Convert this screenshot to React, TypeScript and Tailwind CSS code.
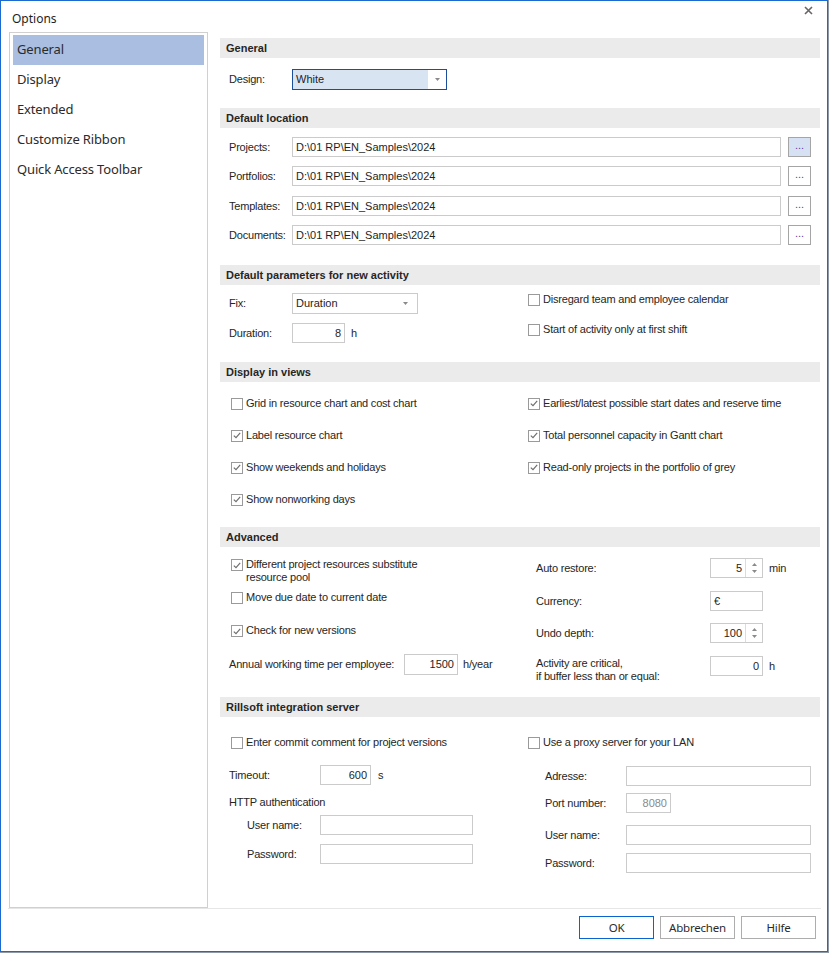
import React from "react";

const labelText = "text-[11px] leading-[13px] tracking-[-0.2px] text-[#262626]";

function SectionHeader({ title, className = "" }: { title: string; className?: string }) {
  return (
    <div className={"flex h-[20px] items-center bg-[#ebebeb] pl-[6px] text-[11px] font-bold text-[#262626] " + className}>
      {title}
    </div>
  );
}

function Arrow({ up = false }: { up?: boolean }) {
  return (
    <svg width="5" height="3" viewBox="0 0 5 3" className="block">
      <path d={up ? "M0 3 L2.5 0 L5 3 Z" : "M0 0 L5 0 L2.5 3 Z"} fill="#8a8a8a" />
    </svg>
  );
}

function CheckBox({ label, checked = false }: { label: React.ReactNode; checked?: boolean }) {
  return (
    <div className="flex items-start">
      <span className="mt-px flex h-[12px] w-[12px] shrink-0 items-center justify-center border border-[#9a9a9a] bg-white">
        {checked && (
          <svg width="8" height="7" viewBox="0 0 8 7">
            <path d="M0.8 3.6 L3 5.6 L7.2 0.9" fill="none" stroke="#6e6e6e" strokeWidth="1.2" />
          </svg>
        )}
      </span>
      <span className={"ml-[3px] " + labelText}>{label}</span>
    </div>
  );
}

function TextBox({ value = "", w, align = "left", muted = false, h = "h-[20px]" }: { value?: string; w: string; align?: "left" | "right"; muted?: boolean; h?: string }) {
  return (
    <div
      className={
        "flex shrink-0 items-center border border-[#cbcbcb] bg-white px-[3px] text-[11px] " +
        h + " " + w + " " +
        (align === "right" ? "justify-end " : "") +
        (muted ? "text-[#8a8a8a]" : "text-[#1e1e1e]")
      }
    >
      {value}
    </div>
  );
}

function Spinner({ value }: { value: string }) {
  return (
    <div className="flex h-[20px] w-[53px] border border-[#cbcbcb] bg-white text-[11px] text-[#1e1e1e]">
      <div className="flex flex-1 items-center justify-end pr-[3px]">{value}</div>
      <div className="flex w-[17px] flex-col items-center justify-center gap-[4px] border-l border-[#dcdcdc]">
        <Arrow up />
        <Arrow />
      </div>
    </div>
  );
}

const menu = ["General", "Display", "Extended", "Customize Ribbon", "Quick Access Toolbar"];

export default function App() {
  return (
    <div className="h-[953px] w-[829px] bg-[#8d98a8] font-['Liberation_Sans',Arial,sans-serif]">
      <div className="flex h-[952px] w-[828px] flex-col border border-[#1a6ad0] bg-white">
        {/* title bar */}
        <div className="flex h-[31px] shrink-0 items-center justify-between pl-[11px] pr-[14px]">
          <span className="pt-[5px] font-['Noto_Sans',sans-serif] text-[12px] text-[#1e1e1e]">Options</span>
          <svg width="9" height="9" viewBox="0 0 9 9" className="-mt-[12px]">
            <path d="M1 1 L8 8 M8 1 L1 8" stroke="#666" strokeWidth="1.6" />
          </svg>
        </div>

        <div className="flex h-[876px] shrink-0">
          {/* page list */}
          <div className="ml-[8px] h-[876px] w-[199px] shrink-0 border border-[#d0d0d0] px-[3px] pt-[2px] font-['Noto_Sans',sans-serif] text-[13px] tracking-[-0.15px] text-[#2b2b2b]">
            {menu.map((m, i) => (
              <div key={m} className={"flex h-[30px] items-center pl-[4px] " + (i === 0 ? "bg-[#a9bee0]" : "")}>
                {m}
              </div>
            ))}
          </div>

          {/* settings */}
          <div className="ml-[12px] w-[600px] pt-[6px]">
            <SectionHeader title="General" />
            <div className="mt-[11px] flex items-center pl-[9px]">
              <span className={"w-[63px] " + labelText}>Design:</span>
              <div className="flex h-[21px] w-[155px] border border-[#1d4e9b] bg-white">
                <div className="flex w-[135px] items-center bg-[#d9e4f3] pl-[3px] text-[11px] text-[#1e1e1e]">White</div>
                <div className="flex flex-1 items-center justify-center"><Arrow /></div>
              </div>
            </div>

            <SectionHeader title="Default location" className="mt-[18px]" />
            {["Projects:", "Portfolios:", "Templates:", "Documents:"].map((l, i) => (
              <div key={l} className={"flex items-center pl-[9px] " + (i === 0 ? "mt-[9px]" : i === 2 ? "mt-[10px]" : "mt-[9px]")}>
                <span className={"w-[63px] " + labelText}>{l}</span>
                <TextBox value="D:\01 RP\EN_Samples\2024" w="w-[489px]" />
                <div
                  className={
                    "ml-[7px] flex h-[20px] w-[23px] items-center justify-center border border-[#a5a5a5] pb-[4px] text-[11px] text-[#6b3aa0] " +
                    (i === 0 ? "bg-[#d6e2f3]" : "bg-white")
                  }
                >
                  ...
                </div>
              </div>
            ))}

            <SectionHeader title="Default parameters for new activity" className="mt-[20px]" />
            <div className="mt-[4px] flex">
              <div className="w-[308px] pl-[9px] pt-[4px]">
                <div className="flex items-center">
                  <span className={"w-[63px] " + labelText}>Fix:</span>
                  <div className="flex h-[21px] w-[126px] items-center justify-between border border-[#cbcbcb] pl-[3px] pr-[9px] text-[11px] text-[#1e1e1e]">
                    Duration
                    <Arrow />
                  </div>
                </div>
                <div className="mt-[9px] flex items-center">
                  <span className={"w-[63px] " + labelText}>Duration:</span>
                  <TextBox value="8" w="w-[53px]" align="right" />
                  <span className={"ml-[6px] " + labelText}>h</span>
                </div>
              </div>
              <div className="flex flex-col">
                <div className="flex h-[20px] items-center"><CheckBox label="Disregard team and employee calendar" /></div>
                <div className="mt-[10px] flex h-[20px] items-center"><CheckBox label="Start of activity only at first shift" /></div>
              </div>
            </div>

            <SectionHeader title="Display in views" className="mt-[19px]" />
            <div className="mt-[5px] grid grid-cols-[308px_1fr]">
              <div className="pl-[11px]">
                {[
                  ["Grid in resource chart and cost chart", false],
                  ["Label resource chart", true],
                  ["Show weekends and holidays", true],
                  ["Show nonworking days", true],
                ].map(([l, c]) => (
                  <div key={l as string} className="flex h-[32px] items-center">
                    <CheckBox label={l as string} checked={c as boolean} />
                  </div>
                ))}
              </div>
              <div>
                {[
                  "Earliest/latest possible start dates and reserve time",
                  "Total personnel capacity in Gantt chart",
                  "Read-only projects in the portfolio of grey",
                ].map((l) => (
                  <div key={l} className="flex h-[32px] items-center">
                    <CheckBox label={l} checked />
                  </div>
                ))}
              </div>
            </div>

            <SectionHeader title="Advanced" className="mt-[12px]" />
            <div className="flex items-start">
              <div className="w-[308px] pt-[11px]">
                <div className="pl-[11px]">
                  <CheckBox checked label={<>Different project resources substitute<br />resource pool</>} />
                  <div className="mt-[7px]"><CheckBox label="Move due date to current date" /></div>
                  <div className="mt-[20px]"><CheckBox checked label="Check for new versions" /></div>
                </div>
                <div className="mt-[17px] flex items-center pl-[9px]">
                  <span className={"w-[175px] " + labelText}>Annual working time per employee:</span>
                  <TextBox value="1500" w="w-[54px]" h="h-[21px]" align="right" />
                  <span className={"ml-[5px] " + labelText}>h/year</span>
                </div>
              </div>
              <div className="pl-[8px] pt-[11px]">
                <div className="flex items-center">
                  <span className={"w-[174px] " + labelText}>Auto restore:</span>
                  <Spinner value="5" />
                  <span className={"ml-[6px] " + labelText}>min</span>
                </div>
                <div className="mt-[13px] flex items-center">
                  <span className={"w-[174px] " + labelText}>Currency:</span>
                  <TextBox value="€" w="w-[53px]" />
                </div>
                <div className="mt-[12px] flex items-center">
                  <span className={"w-[174px] " + labelText}>Undo depth:</span>
                  <Spinner value="100" />
                </div>
                <div className="mt-[13px] flex items-start">
                  <span className={"w-[174px] pt-px " + labelText}>
                    Activity are critical,
                    <br />
                    if buffer less than or equal:
                  </span>
                  <TextBox value="0" w="w-[53px]" align="right" />
                  <span className={"ml-[6px] pt-[4px] " + labelText}>h</span>
                </div>
              </div>
            </div>

            <SectionHeader title="Rillsoft integration server" className="mt-[14px]" />
            <div className="flex items-start">
              <div className="w-[308px] pt-[19px]">
                <div className="pl-[11px]"><CheckBox label="Enter commit comment for project versions" /></div>
                <div className="mt-[16px] flex items-center pl-[9px]">
                  <span className={"w-[91px] " + labelText}>Timeout:</span>
                  <TextBox value="600" w="w-[51px]" align="right" />
                  <span className={"ml-[7px] " + labelText}>s</span>
                </div>
                <div className={"mt-[11px] pl-[9px] " + labelText}>HTTP authentication</div>
                <div className="mt-[6px] flex items-center pl-[27px]">
                  <span className={"w-[73px] " + labelText}>User name:</span>
                  <TextBox w="w-[153px]" />
                </div>
                <div className="mt-[9px] flex items-center pl-[27px]">
                  <span className={"w-[73px] " + labelText}>Password:</span>
                  <TextBox w="w-[153px]" />
                </div>
              </div>
              <div className="pt-[19px]">
                <CheckBox label="Use a proxy server for your LAN" />
                <div className="mt-[17px] flex items-center pl-[17px]">
                  <span className={"w-[81px] " + labelText}>Adresse:</span>
                  <TextBox w="w-[185px]" />
                </div>
                <div className="mt-[7px] flex items-center pl-[17px]">
                  <span className={"w-[81px] " + labelText}>Port number:</span>
                  <TextBox value="8080" w="w-[45px]" align="right" muted />
                </div>
                <div className="mt-[12px] flex items-center pl-[17px]">
                  <span className={"w-[81px] " + labelText}>User name:</span>
                  <TextBox w="w-[185px]" />
                </div>
                <div className="mt-[8px] flex items-center pl-[17px]">
                  <span className={"w-[81px] " + labelText}>Password:</span>
                  <TextBox w="w-[185px]" />
                </div>
              </div>
            </div>
          </div>
        </div>

        {/* dialog buttons */}
        <div className="ml-[7px] mr-[6px] flex flex-1 justify-end gap-[6px] border-t border-[#e6e6e6] pr-[5px] pt-[7px]">
          {["OK", "Abbrechen", "Hilfe"].map((b, i) => (
            <div
              key={b}
              className={
                "flex h-[23px] w-[75px] items-center justify-center border bg-white font-['Noto_Sans',sans-serif] text-[11.5px] tracking-[-0.2px] text-[#2b2b2b] " +
                (i === 0 ? "border-[#0a64cf]" : "border-[#adadad]")
              }
            >
              {b}
            </div>
          ))}
        </div>
      </div>
    </div>
  );
}
